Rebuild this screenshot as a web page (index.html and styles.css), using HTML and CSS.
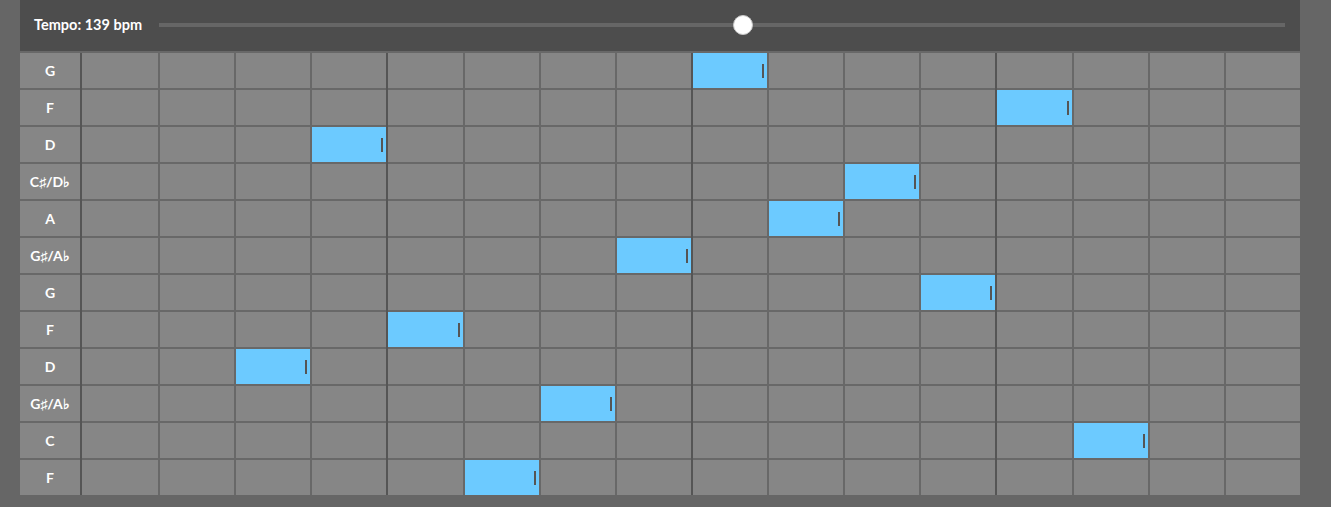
FILE: index.html
```html
<!DOCTYPE html>
<html>
<head>
<meta charset="utf-8">
<link rel="stylesheet" href="styles.css">
</head>
<body>
<div class="app">
  <div class="header">
    <span class="tempo">Tempo: 139 bpm</span>
    <div class="track">
      <div class="thumb" style="left: calc(51.87% - 10px)"></div>
    </div>
  </div>
  <div class="grid" id="grid"></div>
</div>
<script src="app.js"></script>
</body>
</html>
```
FILE: styles.css
```css
html, body {
  margin: 0;
  padding: 0;
  background: #666666;
}
body {
  font-family: "Lato", "Open Sans", sans-serif;
  height: 507px;
  overflow: hidden;
}
.app {
  margin: 0 20px;
  width: 1280px;
  background: #686868;
}
.header {
  height: 51px;
  background: #4d4d4d;
  display: flex;
  align-items: center;
  padding: 0 15px 0 14px;
  box-sizing: border-box;
}
.tempo {
  color: #ffffff;
  font-size: 14.5px;
  font-weight: 700;
  white-space: nowrap;
  margin-right: 17px;
  position: relative;
  top: -1px;
}
.track {
  flex: 1;
  height: 4px;
  background: #666666;
  position: relative;
  top: -1px;
}
.thumb {
  position: absolute;
  top: -8px;
  width: 20px;
  height: 20px;
  box-sizing: border-box;
  border-radius: 50%;
  background: #ffffff;
  border: 1px solid #c8c8c8;
}
.grid {
  display: grid;
  grid-template-columns: 60px 76px repeat(15, 1fr);
  grid-auto-rows: 35px;
  column-gap: 2px;
  row-gap: 2px;
  padding-top: 2px;
  background: #686868;
}
.label {
  background: #868686;
  color: #ffffff;
  font-size: 14px;
  font-weight: 700;
  display: flex;
  align-items: center;
  justify-content: center;
}
.cell {
  background: #868686;
  position: relative;
}
.cell.beat::before {
  content: "";
  position: absolute;
  left: -2px;
  top: 0;
  width: 2px;
  bottom: -2px;
  background: #555555;
}
.cell.beat.last::before {
  bottom: 0;
}
.cell.on {
  background: #6ccaff;
}
.cell.on::after {
  content: "";
  position: absolute;
  right: 3px;
  top: 11px;
  width: 2px;
  height: 14px;
  background: #555555;
}
```
FILE: app.js
```js
var rows = [
  ["G", 8], ["F", 12], ["D", 3], ["C\u266F/D\u266D", 10], ["A", 9], ["G\u266F/A\u266D", 7],
  ["G", 11], ["F", 4], ["D", 2], ["G\u266F/A\u266D", 6], ["C", 13], ["F", 5]
];
var grid = document.getElementById("grid");
rows.forEach(function (r, i) {
  var l = document.createElement("div");
  l.className = "label";
  l.textContent = r[0];
  grid.appendChild(l);
  for (var c = 0; c < 16; c++) {
    var d = document.createElement("div");
    d.className = "cell" + (c % 4 === 0 ? " beat" : "") + (c === r[1] ? " on" : "") + (i === rows.length - 1 ? " last" : "");
    grid.appendChild(d);
  }
});
```
